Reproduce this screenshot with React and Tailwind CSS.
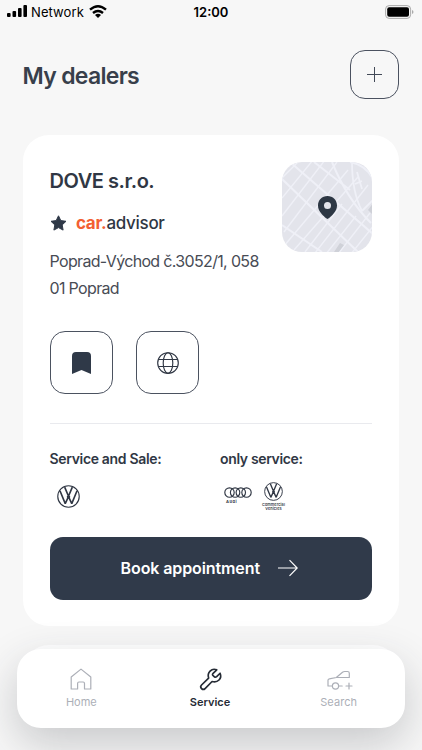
function VW({ className }) {
  return (
    <svg className={className} viewBox="0 0 24 24" fill="none" stroke="#303744">
      <circle cx="12" cy="12" r="11.2" strokeWidth="1.2" />
      <path d="M8 2.2 12 11.8 16 2.2M3.2 6.2 8.6 19.4 12 12.2 15.4 19.4 20.8 6.2M10.3 12.3h3.4" strokeWidth="1.7" strokeLinejoin="bevel" />
    </svg>
  );
}

function MapTile() {
  return (
    <div className="relative h-[90px] w-[90px] overflow-hidden rounded-[20px] bg-[#e3e4eb]">
      <svg className="block h-full w-full" viewBox="0 0 90 90" fill="none" stroke="#eff0f7">
        <path d="M-2 18 16 0M0 36 31 -2M0 54 43 -2M2 70 55 0M2 84 66 8M12 88 76 15M23 90 60 42M33 91 86 23M44 92 74 54M56 92 88 51M69 92 92 63" strokeWidth="1.4" />
        <path d="M8 0 91 72M0 17 76 90M0 63 40 90M32 0 68 28M50 0Q65 37 89 61" strokeWidth="2" />
        <path d="M70 0Q70 30 80 49M68 0Q84 3 91 17M75 10l5 17M73 22l7-3M80 49 91 38" strokeWidth="1.8" />
        <path d="m86 48 5-7v12zM52 90l6-9 4 2-6 8z" fill="#cfd1d8" stroke="none" />
      </svg>
      <svg className="absolute left-[35.5px] top-[34px] h-[23px] w-[19px]" viewBox="0 0 19 23">
        <path d="M9.5 0C4 0 0 4 0 9.4 0 15.2 5.2 20 9.5 23 13.8 20 19 15.2 19 9.4 19 4 15 0 9.5 0Zm0 5.9a3.5 3.5 0 1 1 0 7 3.5 3.5 0 0 1 0-7Z" fill="#2d3744" />
      </svg>
    </div>
  );
}

export default function App() {
  return (
    <div className="relative flex h-[750px] w-[422px] flex-col overflow-hidden bg-[#f7f7f7] font-['Inter',sans-serif] text-[#303744]">
      <header className="grid h-6 shrink-0 grid-cols-3 items-center pl-[7px] pr-[8px] text-black">
        <div className="flex items-center">
          <svg className="-mt-[2px] h-3 w-5" viewBox="0 0 20 12">
            <rect x="0" y="8" width="3.6" height="4" rx="1" />
            <rect x="5.5" y="6" width="3.6" height="6" rx="1" />
            <rect x="11" y="3" width="3.6" height="9" rx="1" />
            <rect x="16.4" y="0" width="3.6" height="12" rx="1" />
          </svg>
          <span className="ml-1 text-[13px] leading-6 tracking-[0.1px]">Network</span>
          <svg className="-mt-[2px] ml-[5px] h-[13px] w-[18px]" viewBox="0 0 18 13" fill="none" stroke="black" strokeWidth="2.4">
            <path d="M1 4.7Q9-2.2 17 4.7M4 8Q9 3.8 14 8" />
            <path d="M6 9.9Q9 7.4 12 9.9L9 13Z" fill="black" stroke="none" />
          </svg>
        </div>
        <span className="pl-px text-center text-[13px] font-semibold leading-6">12:00</span>
        <svg className="h-[14px] w-[29px] justify-self-end" viewBox="0 0 29 14">
          <rect x=".6" y=".6" width="25" height="12.8" rx="3.5" fill="none" stroke="#aaa" />
          <rect x="2.2" y="2.2" width="21.8" height="9.6" rx="2" />
          <path d="M27 5v4q1.500-.4 1.500-2T27 5" fill="#aaa" />
        </svg>
      </header>

      <div className="mt-[26px] flex h-[49px] shrink-0 items-center justify-between pl-[22.5px] pr-[23px]">
        <h1 className="mt-[2px] text-[23px] font-semibold leading-8 tracking-[-0.7px] text-[#383f4b]">My dealers</h1>
        <button className="flex h-[49px] w-[49px] items-center justify-center rounded-[15px] border border-[#4b5260]">
          <svg className="h-[15px] w-[15px]" viewBox="0 0 15 15" stroke="#424957"><path d="M7.5 0v15M0 7.5h15" /></svg>
        </button>
      </div>

      <main className="mt-[36px] flex flex-col gap-[19px] px-[22.5px]">
        <section className="flex h-[491px] w-[376.5px] shrink-0 flex-col rounded-[26px] bg-white px-[27px] pt-[27px]">
          <div className="flex h-[142px] justify-between">
            <div className="w-[220px]">
              <h2 className="mt-[3px] text-[20px] font-semibold leading-8 tracking-[-0.45px]">DOVE s.r.o.</h2>
              <div className="mt-[12px] flex h-[28px] items-center">
                <svg className="h-[16px] w-[17px]" viewBox="0 0 17 16"><path d="M8.5.8 10.8 5.6 16 6.3 12.2 9.9 13.1 15.1 8.5 12.6 3.9 15.1 4.8 9.9 1 6.3 6.2 5.6Z" fill="#2f3948" stroke="#2f3948" strokeLinejoin="round" /></svg>
                <span className="ml-[9.5px] text-[17px] font-medium leading-7 tracking-[-0.3px]"><b className="font-bold text-[#f36032]">car.</b>advisor</span>
              </div>
              <p className="mt-[10.5px] whitespace-nowrap text-[16px] leading-[27px] tracking-[-0.66px] text-[#484c55]">Poprad-Východ č.3052/1, 058<br />01 Poprad</p>
            </div>
            <MapTile />
          </div>
          <div className="mt-[27px] flex gap-[23.5px]">
            <button className="flex h-[63px] w-[63px] items-center justify-center rounded-[15px] border border-[#4b5260]">
              <svg className="h-[22px] w-[19px]" viewBox="0 0 19 22"><path d="M0 22V4Q0 0 4 0h11q4 0 4 4v18l-9.5-4Z" fill="#2f3948" /></svg>
            </button>
            <button className="flex h-[63px] w-[63px] items-center justify-center rounded-[15px] border border-[#4b5260]">
              <svg className="h-[22px] w-[22px]" viewBox="0 0 22 22" fill="none" stroke="#303744" strokeWidth="1.15"><circle cx="11" cy="11" r="10.3" /><ellipse cx="11" cy="11" rx="4.8" ry="10.3" /><path d="M1.3 7.5h19.4M1.3 14.5h19.4" /></svg>
            </button>
          </div>
          <div className="mt-[29px] border-t border-[#e9eaee]" />
          <div className="flex h-[112.5px] pt-[24px]">
            <div className="w-[170.5px]">
              <h3 className="text-[14px] font-semibold leading-[22px] tracking-[-0.33px]">Service and Sale:</h3>
              <VW className="ml-[7px] mt-[15px] h-[23px] w-[23px]" />
            </div>
            <div>
              <h3 className="text-[14px] font-semibold leading-[22px] tracking-[-0.35px]">only service:</h3>
              <div className="mt-[12px] flex">
                <div className="ml-[4px] w-[28px] pt-[5px]">
                  <svg className="block h-[11px] w-[28px]" viewBox="0 0 28 11" fill="none" stroke="#303744" strokeWidth="1.15"><circle cx="5.5" cy="5.5" r="4.7" /><circle cx="11.1" cy="5.5" r="4.7" /><circle cx="16.8" cy="5.5" r="4.7" /><circle cx="22.5" cy="5.5" r="4.7" /></svg>
                  <span className="ml-[2px] mt-px block text-[4px] font-bold leading-[6px] tracking-[0.5px]">Audi</span>
                </div>
                <div className="ml-[9px] flex w-[25px] flex-col items-center">
                  <VW className="h-[19px] w-[19px]" />
                  <span className="mt-[2px] text-center text-[3.8px] font-semibold leading-[4.3px] tracking-[0.1px]">Commercial<br />Vehicles</span>
                </div>
              </div>
            </div>
          </div>
          <button className="flex h-[63px] items-center justify-center rounded-[13px] bg-[#303a4a] pr-[3px] text-white">
            <span className="text-[16px] font-semibold leading-6 tracking-[-0.1px]">Book appointment</span>
            <svg className="ml-[18px] h-[18px] w-[20px]" viewBox="0 0 20 18" fill="none" stroke="white" strokeWidth="1.2"><path d="M0 9h19M11.5 1.2 19.2 9l-7.7 7.8" /></svg>
          </button>
        </section>
        <section className="h-[60px] w-[376.5px] shrink-0 rounded-[26px] bg-white" />
      </main>

      <nav className="absolute left-[17px] top-[649px] flex h-[79px] w-[388px] rounded-[24px] bg-white pr-[2px] shadow-[0_16px_44px_rgba(44,48,58,0.23)]">
        <div className="flex flex-1 flex-col items-center pt-[19px] text-[#acafb7]">
          <svg className="h-[22px] w-[22px]" viewBox="0 0 22 22" fill="none" stroke="currentColor" strokeWidth="1.2" strokeLinejoin="round"><path d="M1.2 9 11 1.1 20.8 9v12h-6.3v-5.6q0-1.4-1.4-1.4H9q-1.4 0-1.4 1.4V21H1.2Z" /></svg>
          <span className="mt-[4px] text-[11px] leading-4">Home</span>
        </div>
        <div className="flex flex-1 flex-col items-center pt-[18px] text-[#252b35]">
          <svg className="h-[25px] w-[25px]" viewBox="0 0 24 24" fill="none" stroke="currentColor" strokeWidth="1.6" strokeLinecap="round" strokeLinejoin="round"><path d="M14.5 6.1q-1.2 1.2 0 2.1l1.3 1.2q1 .9 2.1-.1l3.3-3.3c2.2 5.1-2.4 9.5-7.7 7.9l-6.7 6.8a2.3 2.3 0 0 1-3.4-3.4l6.8-6.7C8.5 5.3 13 .7 18 2.7Z" /></svg>
          <span className="mt-[2px] text-[11px] font-semibold leading-4">Service</span>
        </div>
        <div className="flex flex-1 flex-col items-center pt-[19px] text-[#acafb7]">
          <svg className="ml-[3px] h-[22px] w-[26px]" viewBox="0 0 26 22" fill="none" stroke="currentColor" strokeWidth="1.2" strokeLinejoin="round" strokeLinecap="round"><path d="M5 18H1v-5.8q0-1.2 1.3-1.4L9.3 9.5l6.2-5.2q1-.8 2.2-.8h2.8q1.8 0 1.8 1.8v4.2H9.3M12 18h3.2M22 15v6M19 18h6" /><circle cx="8.5" cy="18" r="3.1" /></svg>
          <span className="mt-[4px] text-[11px] leading-4 tracking-[0.1px]">Search</span>
        </div>
      </nav>
    </div>
  );
}
